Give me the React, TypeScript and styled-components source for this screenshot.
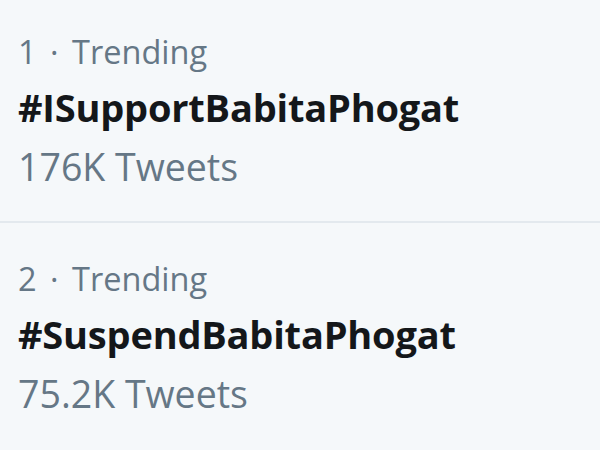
import React from "react";
import styled, { createGlobalStyle } from "styled-components";

const GlobalStyle = createGlobalStyle`
  html, body {
    margin: 0;
    padding: 0;
    background: #f5f8fa;
  }
  body {
    font-family: "Open Sans", "Noto Sans", sans-serif;
  }
`;

const TrendList = styled.div`
  width: 600px;
  height: 450px;
  overflow: hidden;
  background: #f5f8fa;
`;

const Trend = styled.div<{ $last?: boolean }>`
  display: flex;
  flex-direction: column;
  padding: 28px 18px 25px;
  border-bottom: ${(p) => (p.$last ? "none" : "2px solid #e3e9ee")};

  & + & {
    padding-top: 32px;
  }
`;

const Meta = styled.div`
  font-size: 32.5px;
  line-height: 48px;
  color: #657786;
  white-space: pre;
`;

const Dot = styled.span`
  margin: 0 5px;
`;

const Tag = styled.div`
  font-size: 38px;
  font-weight: 700;
  line-height: 62px;
  letter-spacing: -0.2px;
  color: #14171a;
  white-space: nowrap;
`;

const Count = styled.div`
  font-size: 37.5px;
  line-height: 58px;
  color: #657786;
  white-space: nowrap;
`;

const trends = [
  { rank: 1, tag: "#ISupportBabitaPhogat", count: "176K" },
  { rank: 2, tag: "#SuspendBabitaPhogat", count: "75.2K" },
];

const App = (): JSX.Element => {
  return (
    <>
      <GlobalStyle />
      <TrendList>
        {trends.map((t, i) => (
          <Trend key={t.rank} $last={i === trends.length - 1}>
            <Meta>
              {t.rank} <Dot>·</Dot> Trending
            </Meta>
            <Tag>{t.tag}</Tag>
            <Count>{t.count} Tweets</Count>
          </Trend>
        ))}
      </TrendList>
    </>
  );
};

export default App;
